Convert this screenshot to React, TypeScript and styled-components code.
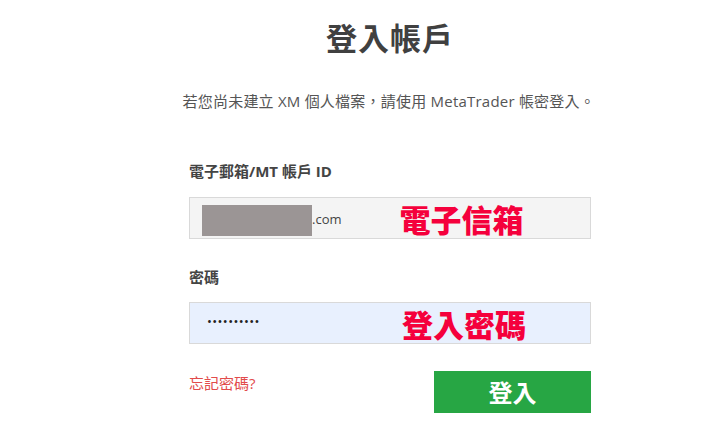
import styled, { createGlobalStyle } from "styled-components";

const GlobalStyle = createGlobalStyle`
  html, body {
    margin: 0;
    padding: 0;
    background: #ffffff;
  }
  body {
    font-family: "Open Sans", "Noto Sans CJK TC", sans-serif;
    color: #444444;
  }
`;

const Page = styled.div`
  width: 727px;
  height: 427px;
  overflow: hidden;
  box-sizing: border-box;
  padding: 16px 0 0 189px;
`;

const Form = styled.div`
  width: 402px;
  display: flex;
  flex-direction: column;
`;

const Title = styled.h1`
  margin: 0;
  font-size: 31px;
  line-height: 44px;
  font-weight: 700;
  color: #404040;
  text-align: center;
  letter-spacing: 1px;
`;

const Subtitle = styled.p`
  margin: 31px -4px 0 -20px;
  font-size: 15px;
  line-height: 20px;
  letter-spacing: 0.22px;
  color: #555555;
  text-align: right;
  white-space: nowrap;
`;

const Label = styled.div<{ $top: number }>`
  margin-top: ${props => props.$top}px;
  font-size: 15px;
  line-height: 20px;
  font-weight: 700;
  color: #444444;
`;

const Field = styled.div<{ $bg: string; $top: number }>`
  margin-top: ${props => props.$top}px;
  height: 42px;
  box-sizing: border-box;
  border: 1px solid #d9d9d9;
  background: ${props => props.$bg};
  display: flex;
  align-items: center;
  padding-left: 12px;
`;

const Masked = styled.div`
  width: 110px;
  height: 31px;
  margin-top: 4px;
  background: #9b9595;
`;

const Domain = styled.span`
  font-size: 13px;
  color: #444444;
  margin-top: 2px;
`;

const Dots = styled.span`
  font-size: 13px;
  color: #222222;
  letter-spacing: 0.4px;
  margin-left: 5px;
  margin-bottom: 4px;
`;

const Hint = styled.span<{ $offset: number }>`
  margin-left: ${props => props.$offset}px;
  font-family: "Noto Sans CJK TC", sans-serif;
  font-size: 31px;
  font-weight: 900;
  color: #f5003c;
  line-height: 1;
`;

const Footer = styled.div`
  margin-top: 27px;
  display: flex;
  justify-content: space-between;
  align-items: flex-start;
`;

const Forgot = styled.a`
  margin-top: 2px;
  font-size: 15px;
  line-height: 20px;
  color: #e24b4b;
  text-decoration: none;
  cursor: pointer;
`;

const Submit = styled.button`
  width: 157px;
  height: 42px;
  border: none;
  background: #27a644;
  color: #ffffff;
  font-family: "Noto Sans CJK TC", sans-serif;
  font-size: 24px;
  font-weight: 700;
  line-height: 1;
  cursor: pointer;
`;

const App = () => {
  return (
    <>
      <GlobalStyle />
      <Page>
        <Form>
          <Title>登入帳戶</Title>
          <Subtitle>若您尚未建立 XM 個人檔案，請使用 MetaTrader 帳密登入。</Subtitle>
          <Label $top={50}>電子郵箱/MT 帳戶 ID</Label>
          <Field $bg="#f4f4f4" $top={16}>
            <Masked />
            <Domain>.com</Domain>
            <Hint $offset={58}>電子信箱</Hint>
          </Field>
          <Label $top={28}>密碼</Label>
          <Field $bg="#e8f0fe" $top={15}>
            <Dots>••••••••••</Dots>
            <Hint $offset={142}>登入密碼</Hint>
          </Field>
          <Footer>
            <Forgot>忘記密碼?</Forgot>
            <Submit>登入</Submit>
          </Footer>
        </Form>
      </Page>
    </>
  );
};

export default App;
